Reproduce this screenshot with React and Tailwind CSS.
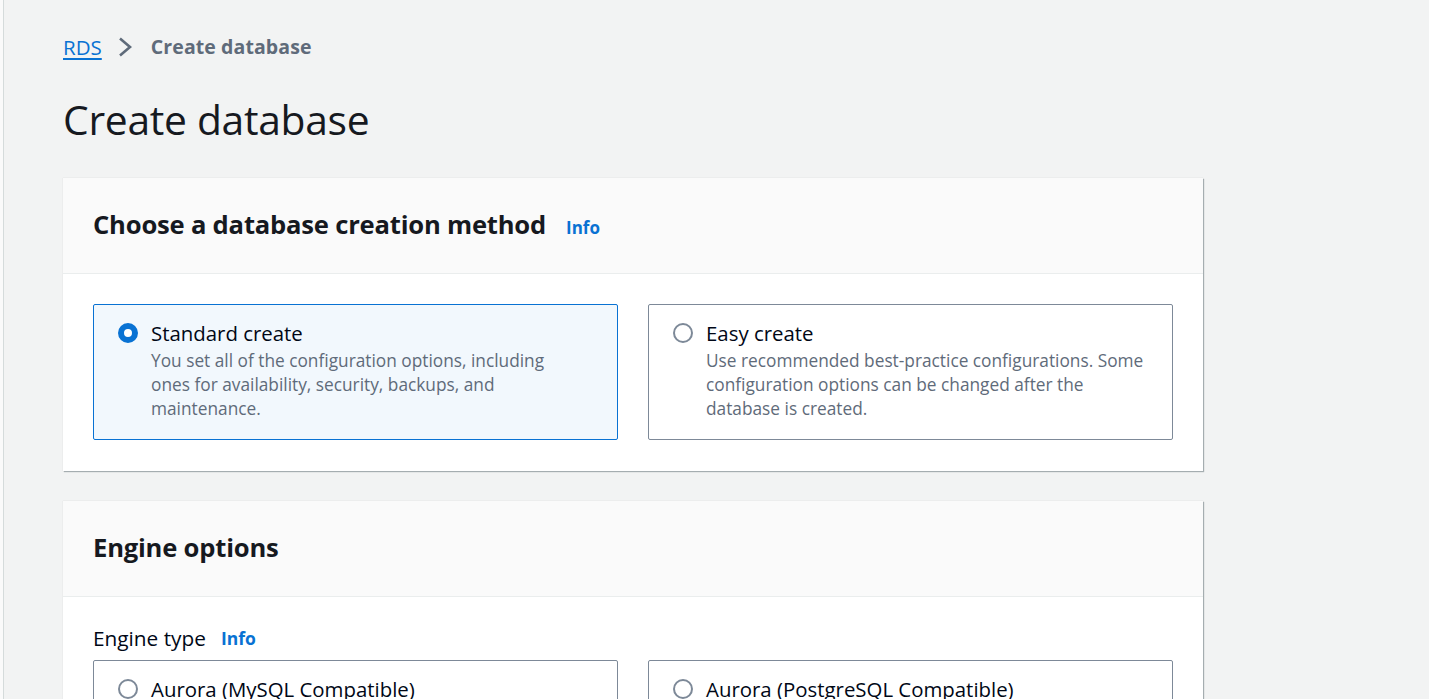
function Radio({ checked }) {
  return checked ? (
    <span className="mt-[3px] w-5 h-5 rounded-full border-[6px] border-[#0972d3] bg-white flex-shrink-0" />
  ) : (
    <span className="mt-[3px] w-5 h-5 rounded-full border-2 border-[#7d8998] bg-white flex-shrink-0" />
  )
}

function Option({ checked, title, children }) {
  return (
    <div
      className={`rounded-[2px] border px-6 pt-[15px] pb-[18px] flex gap-[13px] ${
        checked ? 'border-[#0972d3] bg-[#f2f8fd]' : 'border-[#7d8998] bg-white'
      }`}
    >
      <Radio checked={checked} />
      <div>
        <div className="text-[20.4px] leading-[26px] text-[#000716]">{title}</div>
        {children && <p className="text-[17.3px] leading-[24px] text-[#5f6b7a] mt-[3px]">{children}</p>}
      </div>
    </div>
  )
}

function Card({ title, info, children }) {
  return (
    <section className="bg-white shadow-[1px_1px_1px_rgba(0,28,36,0.3),0_0_1px_rgba(0,28,36,0.15)]">
      <div className="bg-[#fafafa] border-b border-[#eaeded] h-[96px] px-[30px] flex items-center">
        <h2 className="text-[25.6px] font-bold text-[#16191f] tracking-[-0.2px]">{title}</h2>
        {info && <a className="ml-5 mt-1 text-[17px] font-bold text-[#0972d3]">Info</a>}
      </div>
      <div className="px-[30px] pt-[30px] pb-[31px]">{children}</div>
    </section>
  )
}

export default function App() {
  return (
    <div className="min-h-screen bg-[#fafafa] pl-[3px]">
      <div
        className="min-h-screen bg-[#f2f3f3] border-l border-[#d5dbdb] pl-[59px] pr-[226px] text-[#000716]"
        style={{ fontFamily: '"Open Sans", Arial, sans-serif' }}
      >
        {/* Breadcrumb */}
        <nav className="pt-[33px] flex items-center text-[19.5px] leading-[28px]">
          <a className="text-[#0972d3] underline underline-offset-[3px] text-[20.5px]">RDS</a>
          <svg className="ml-[16px] mr-[18px] w-[15px] h-[20px] text-[#5f6b7a]" viewBox="0 0 15 20" fill="none">
            <path d="M2 1.5 L12 10 L2 18.5" stroke="currentColor" strokeWidth="2.6" />
          </svg>
          <span className="font-bold text-[#5f6b7a] tracking-[0.1px]">Create database</span>
        </nav>

        <h1 className="mt-[32px] text-[40.8px] leading-[52px] font-normal text-[#16191f] tracking-[-0.3px]">Create database</h1>

        <div className="mt-[33px] flex flex-col gap-[30px]">
          <Card title="Choose a database creation method" info>
            <div className="grid grid-cols-2 gap-[30px]">
              <Option checked title="Standard create">
                You set all of the configuration options, including
                <br />
                ones for availability, security, backups, and
                <br />
                maintenance.
              </Option>
              <Option title="Easy create">
                Use recommended best-practice configurations. Some
                <br />
                configuration options can be changed after the
                <br />
                database is created.
              </Option>
            </div>
          </Card>

          <Card title="Engine options">
            <div className="text-[20.8px] leading-[22px] text-[#000716] flex items-center">
              Engine type
              <a className="ml-[15px] text-[17.5px] font-bold text-[#0972d3]">Info</a>
            </div>
            <div className="mt-[11px] grid grid-cols-2 gap-[30px]">
              <Option title="Aurora (MySQL Compatible)" />
              <Option title="Aurora (PostgreSQL Compatible)" />
            </div>
          </Card>
        </div>
      </div>
    </div>
  )
}
